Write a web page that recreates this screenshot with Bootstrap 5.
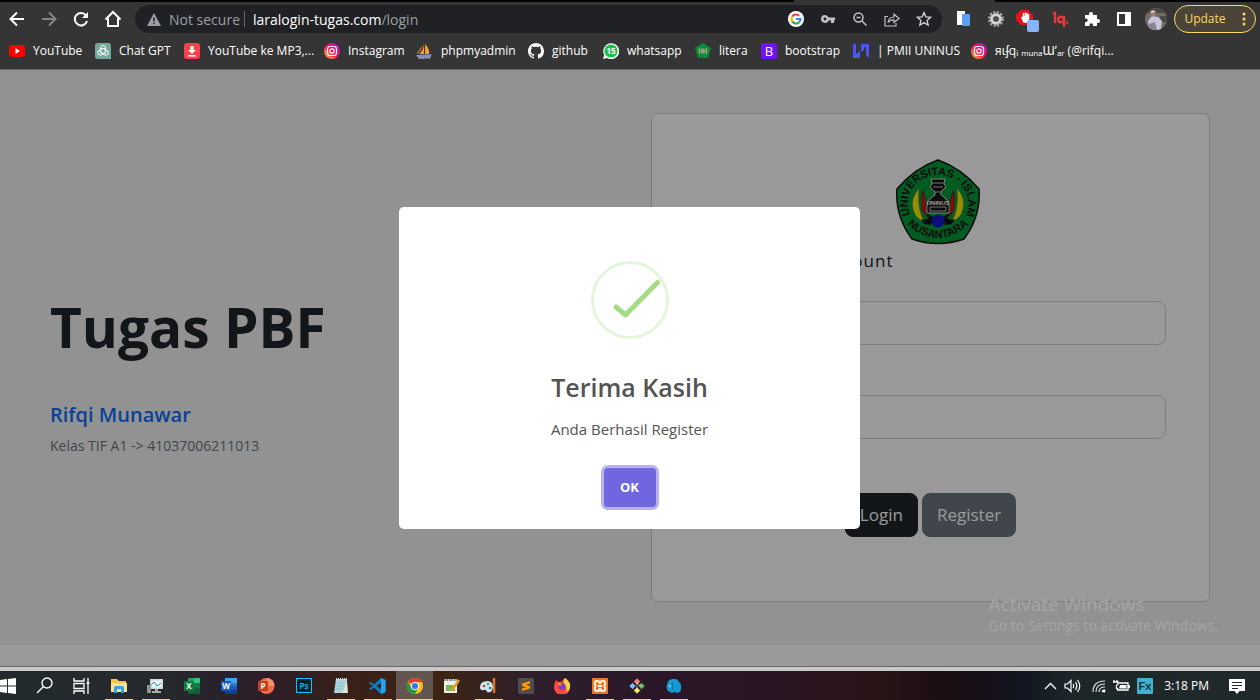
<!DOCTYPE html>
<html lang="id">
<head>
<meta charset="utf-8">
<meta name="viewport" content="width=device-width, initial-scale=1">
<title>Login - Tugas PBF</title>
<link href="https://cdn.jsdelivr.net/npm/bootstrap@5.3.0/dist/css/bootstrap.min.css" rel="stylesheet">
<style>
  body { font-family: "Open Sans", "Noto Sans", "DejaVu Sans", sans-serif; background: #353535; }
  svg { display: block; flex: none; }
  .plain { border: 0; background: none; padding: 0; color: inherit; display: flex; align-items: center; justify-content: center; }

  /* browser toolbar */
  .tabline { height: 2px; background: linear-gradient(90deg, #000 63%, #353535 63%, #353535 79%, #000 79%); }
  .toolbar { height: 34px; color: #fff; }
  .tool { width: 32px; height: 28px; flex: none; }
  .arrows { padding: 0 6px 0 1px; }
  .extensions { padding: 0 2px 0 6px; }
  .omnibox { background: #202124; height: 28px; color: #9aa0a6; font-size: 14px; border-radius: 14px; padding: 0 2px 0 8px; }
  .omnibox .host { color: #fff; }
  .divider { width: 1px; height: 16px; background: #5f6368; margin: 0 8px 0 4px; }
  .update { height: 28px; width: 82px; border: 1px solid #fdd663; border-radius: 14px; background: #4a4538; color: #fdd663; font-size: 12px; }
  .marks { display: grid; grid-template-columns: 86px 89px 140px 92px 112px 75px 92px 66px 92px 118px 1fr; height: 34px; font-size: 12px; padding: 0 0 3px 9px; border-bottom: 1px solid #666; }
  .marks a { color: #fff; text-decoration: none; white-space: nowrap; display: flex; align-items: center; gap: 8px; }

  /* web page */
  .site { background: #f4f4f4; }
  .site main { padding: 43px 50px; }
  .split { display: grid; grid-template-columns: 1fr 1fr; gap: 42px; align-items: center; }
  .intro { padding-top: 40px; }
  .site h1 { font-size: 55px; line-height: 64px; font-weight: 700; color: #212529; margin-bottom: 40px; }
  .owner { font-size: 20px; line-height: 32px; font-weight: 600; color: #0d6efd; text-decoration: none; }
  .klass { font-size: 14px; line-height: 30px; color: #6c757d; }
  .login { border: 1px solid #d2d2d2; border-radius: 6px; padding: 45px 43px 64px; background: #fff; }
  .login h5 { font-size: 17px; line-height: 24px; letter-spacing: 1px; font-weight: 400; color: #212529; }
  .login .form-control { height: 44px; border-radius: 8px; border-color: #ced4da; }
  .login .form-label { display: block; line-height: 22px; font-size: 16px; }
  .login .btn { height: 44px; padding: 0 14px; font-size: 17px; border-radius: 8px; color: #fff; }
  .login .btn-dark { background: #212529; }
  .login .btn-secondary { background: #6c757d; }
  .crest { margin-left: 15px; }
  .site footer { background: #fff; height: 21px; }
  .veil { background: rgba(0, 0, 0, .4); padding-right: 1px; }
  .notice { width: 461px; background: #fff; border-radius: 5px; color: #545454; padding: 54px 20px 22px; }
  .notice h2 { font-size: 25px; line-height: 36px; font-weight: 600; margin: 30px 0 12px; }
  .notice p { font-size: 15px; line-height: 24px; margin-bottom: 27px; }
  .ok { width: 52px; height: 39px; border: 0; border-radius: 4px; background: #7066e0; color: #fff; font-size: 13px; font-weight: 700; box-shadow: 0 0 0 3px rgba(112, 100, 223, .5); }
  .watermark { right: 42px; bottom: 30px; color: #a5a5a5; pointer-events: none; }
  .watermark div { font-size: 19px; line-height: 24px; }
  .watermark small { font-size: 14px; line-height: 20px; display: block; }
  .edge { height: 5px; background: #c8c8c8; border-top: 1px solid #666; }

  /* taskbar */
  .taskbar { height: 29px; color: #fff; background: linear-gradient(90deg, #222a2e 0, #25292d 13%, #2c1d29 21%, #3a2119 28%, #3e2413 35%, #2f1f2b 42%, #291729 52%, #2a1524 62%, #291517 69%, #1b0d12 75%, #12141f 81%, #1d272a 85%, #20292c 100%); }
  .task { width: 37px; height: 29px; }
  .running { background: linear-gradient(#f3cd9e, #f3cd9e) center bottom / 28px 1px no-repeat; }
  .current { background: linear-gradient(#f3cd9e, #f3cd9e) center bottom / 37px 1px no-repeat #635550; }
  .tray { gap: 7px; font-size: 12px; padding-right: 15px; }
  .tray time { margin: 0 13px 0 4px; }
</style>
</head>
<body class="d-flex flex-column min-vh-100">

<header>
  <div class="tabline"></div>
  <div class="toolbar d-flex align-items-center">
    <nav class="arrows d-flex" aria-label="Navigasi">
      <button class="plain tool" aria-label="Kembali"><svg width="16" height="16" fill="none" stroke="#fff" stroke-width="2"><path d="M15 8H2M8 1.500L1.500 8L8 14.500"/></svg></button>
      <button class="plain tool" aria-label="Maju"><svg width="16" height="16" fill="none" stroke="#858585" stroke-width="2"><path d="M1 8H14M8 1.500L14.500 8L8 14.500"/></svg></button>
      <button class="plain tool" aria-label="Muat ulang"><svg width="16" height="16" fill="none" stroke="#fff" stroke-width="2"><path d="M13 4.500A6.200 6.200 0 1 0 14 10"/><path d="M15 1V7H9Z" fill="#fff" stroke="none"/></svg></button>
      <button class="plain tool" aria-label="Beranda"><svg width="18" height="18" fill="none" stroke="#fff" stroke-width="2"><path d="M1.500 9.500L9 2L16.500 9.500M4 8V16H14V8"/></svg></button>
    </nav>
    <div class="omnibox d-flex align-items-center flex-grow-1">
      <svg class="ms-1 me-2" width="14" height="13"><path d="M7 0L14 13H0Z" fill="#9aa0a6"/><path d="M7 4.500V8.500M7 9.800V11.300" stroke="#202124" stroke-width="1.500"/></svg>
      <span>Not secure</span>
      <span class="divider"></span>
      <span class="flex-grow-1 text-nowrap"><span class="host">laralogin-tugas.com</span>/login</span>
      <button class="plain tool" aria-label="Google"><svg width="16" height="16" viewBox="0 0 16 16"><circle cx="8" cy="8" r="8" fill="#fff"/><g fill="none" stroke-width="2.200"><path d="M4.200 5.600A4.500 4.500 0 0 1 11.200 4.800" stroke="#ea4335"/><path d="M4.200 10.400A4.500 4.500 0 0 1 4.200 5.600" stroke="#fbbc05"/><path d="M11 11.400A4.500 4.500 0 0 1 4.200 10.400" stroke="#34a853"/><path d="M8 8H12.500A4.500 4.500 0 0 1 11 11.400" stroke="#4285f4"/></g></svg></button>
      <button class="plain tool" aria-label="Sandi"><svg width="14" height="10" fill="#bdc1c6" fill-rule="evenodd"><path d="M4 1A4 4 0 1 0 7.700 6.500H10V9H13V6.500H14V3.500H7.700A4 4 0 0 0 4 1ZM4 3.600A1.400 1.400 0 1 1 4 6.400A1.400 1.400 0 1 1 4 3.600Z"/></svg></button>
      <button class="plain tool" aria-label="Zoom"><svg width="14" height="14" fill="none" stroke="#bdc1c6" stroke-width="1.500"><circle cx="5.500" cy="5.500" r="4.500"/><path d="M9 9L13.500 13.500M3.500 5.500H7.500"/></svg></button>
      <button class="plain tool" aria-label="Bagikan"><svg width="16" height="15" fill="none" stroke="#bdc1c6" stroke-width="1.200"><path d="M4 4.500H1V14H12V11M4 10.500C4.500 7 6.500 5 10 5V2L15 6.500L10 10.500V7.800C7.500 7.800 5.500 8.500 4 10.500Z"/></svg></button>
      <button class="plain tool" aria-label="Tandai"><svg width="16" height="16" fill="none" stroke="#d5d7da" stroke-width="1.300"><path d="M8 1.500L9.900 6L14.700 6.300L11 9.400L12.200 14.200L8 11.600L3.800 14.200L5 9.400L1.300 6.300L6.100 6Z"/></svg></button>
    </div>
    <div class="extensions d-flex">
      <button class="plain tool" aria-label="Salin"><svg width="14" height="16"><rect x="0" y="0" width="8" height="14" fill="#fff"/><rect x="5" y="3" width="8" height="12" rx="1" fill="#5b9ef4"/></svg></button>
      <button class="plain tool" aria-label="Pengaturan"><svg width="16" height="16"><circle cx="8" cy="8" r="6.500" fill="none" stroke="#a7a7a7" stroke-width="3" stroke-dasharray="2 1.400"/><circle cx="8" cy="8" r="4.300" fill="none" stroke="#d2d2d2" stroke-width="3"/><circle cx="8" cy="8" r="1.800" fill="#555"/></svg></button>
      <button class="plain tool" aria-label="AdBlock"><svg width="24" height="26"><path d="M5 4H12L17 9V14L12 19H5L0 14V9Z" fill="#e8121a"/><path d="M5.500 11L8 16H11.500L12.500 13V8M7.500 12V7M9.500 12V6.500M11.200 12V7" stroke="#fff" stroke-width="1.500" fill="#fff"/><rect x="11" y="14" width="12" height="12" rx="2" fill="#8ab4f8"/></svg></button>
      <button class="plain tool" aria-label="lq"><svg width="16" height="16" fill="none" stroke="#e5383b" stroke-width="2.400"><path d="M1 2H3V12"/><circle cx="9" cy="8.500" r="2.800"/><path d="M12 5V16M14 11.500H16"/></svg></button>
      <button class="plain tool" aria-label="Ekstensi"><svg width="16" height="16" viewBox="0 0 16 16" fill="#fff"><path d="M1 4H5V3A2 2 0 0 1 9 3V4H13V8H14A2 2 0 0 1 14 12H13V15H9V14A1.700 1.700 0 0 0 5.500 14V15H1V11H2A1.700 1.700 0 0 0 2 7.500H1Z"/></svg></button>
      <button class="plain tool" aria-label="Panel samping"><svg width="14" height="14"><path d="M0 0H14V14H0ZM2 2V12H8V2Z" fill="#fff" fill-rule="evenodd"/></svg></button>
      <button class="plain tool" aria-label="Profil"><svg width="22" height="22"><clipPath id="face"><circle cx="11" cy="11" r="11"/></clipPath><g clip-path="url(#face)"><path d="M0 0H22V22H0Z" fill="#706b64"/><path d="M0 0H22V5H0ZM15 8H22V14H15Z" fill="#4c4944"/><path d="M3 13L7 8L13 9L17 13L16 22H4Z" fill="#c6c4dc"/><circle cx="8" cy="6" r="2.500" fill="#a87a6a"/><path d="M5 5Q7 0 11 4Z" fill="#d9d4d2"/><path d="M4 16L10 14L12 22H3Z" fill="#8c8296"/></g></svg></button>
    </div>
    <button class="update plain me-1"><span class="me-3">Update</span><svg width="4" height="14" fill="#fdd663"><circle cx="2" cy="2" r="1.500"/><circle cx="2" cy="7" r="1.500"/><circle cx="2" cy="12" r="1.500"/></svg></button>
  </div>
  <nav class="marks" aria-label="Bookmark">
    <a href="#"><svg width="16" height="16"><rect y="2" width="16" height="12" rx="3" fill="#f00"/><path d="M6.500 5L11 8L6.500 11Z" fill="#fff"/></svg>YouTube</a>
    <a href="#"><svg width="16" height="16"><path d="M3 0H13A3 3 0 0 1 16 3V16H3A3 3 0 0 1 0 13V3A3 3 0 0 1 3 0Z" fill="#74aa9c"/><g fill="none" stroke="#fff" stroke-width=".9"><rect x="5.500" y="2.500" width="5" height="8" rx="2.500"/><rect x="5.500" y="2.500" width="5" height="8" rx="2.500" transform="rotate(120 8 8)"/><rect x="5.500" y="2.500" width="5" height="8" rx="2.500" transform="rotate(240 8 8)"/></g></svg>Chat GPT</a>
    <a href="#"><svg width="16" height="16"><rect width="16" height="16" rx="3" fill="#fb3f4c"/><path d="M6.500 3H9.500V7H12L8 11L4 7H6.500ZM4 12H12V13.500H4Z" fill="#fff"/></svg>YouTube ke MP3,...</a>
    <a href="#"><svg width="16" height="16"><defs><linearGradient id="ig" x1="0" y1="1" x2="1" y2="0"><stop stop-color="#ffd029"/><stop offset=".5" stop-color="#f5105f"/><stop offset="1" stop-color="#a017e0"/></linearGradient></defs><circle cx="8" cy="8" r="8" fill="url(#ig)"/><rect x="3.500" y="3.500" width="9" height="9" rx="2.500" fill="none" stroke="#fff" stroke-width="1.200"/><circle cx="8" cy="8" r="2.200" fill="none" stroke="#fff" stroke-width="1.200"/></svg>Instagram</a>
    <a href="#"><svg width="17" height="16"><path d="M8 0V11H3Q8 7 8 0ZM9 1Q14 6 13 11H9ZM6 3Q5 9 0 11Q4 7 6 3Z" fill="#f89c28"/><path d="M0 12L16 11L14 15L3 16Z" fill="#6c78af"/><path d="M1 13H16M3 15H14" stroke="#bbb" stroke-dasharray="2 1"/></svg>phpmyadmin</a>
    <a href="#"><svg width="16" height="16" viewBox="0 0 16 16"><path fill="#fff" d="M8 0C3.580 0 0 3.580 0 8c0 3.540 2.290 6.530 5.470 7.590.4.070.55-.17.55-.38 0-.19-.01-.82-.01-1.490-2.010.37-2.530-.49-2.690-.94-.09-.23-.48-.94-.82-1.130-.28-.15-.68-.52-.01-.53.63-.01 1.080.58 1.230.82.72 1.210 1.870.87 2.330.66.07-.52.28-.87.51-1.070-1.780-.2-3.640-.89-3.640-3.950 0-.87.31-1.590.82-2.150-.08-.2-.36-1.020.08-2.120 0 0 .67-.21 2.200.82.64-.18 1.320-.27 2-.27s1.360.09 2 .27c1.530-1.040 2.200-.82 2.200-.82.44 1.100.16 1.920.08 2.120.51.56.82 1.270.82 2.150 0 3.070-1.870 3.750-3.650 3.950.29.25.54.73.54 1.480 0 1.070-.01 1.930-.01 2.200 0 .21.15.46.55.38A8.010 8.010 0 0 0 16 8c0-4.420-3.580-8-8-8"/></svg>github</a>
    <a href="#"><svg width="16" height="16"><path d="M0 16L1.200 12A8 8 0 1 1 4 15Z" fill="#fff"/><circle cx="8" cy="8" r="6.600" fill="#1fc04c"/><text x="8" y="11" text-anchor="middle" font-size="8" font-weight="700" fill="#fff">15</text></svg>whatsapp</a>
    <a href="#"><svg width="16" height="16"><path d="M8 0L16 5L13 15H3L0 5Z" fill="#078b3c"/><path d="M5 5Q3 8 5 11M11 5Q13 8 11 11" stroke="#d8b82a" fill="none"/><circle cx="8" cy="8" r="2.500" fill="#999"/></svg>litera</a>
    <a href="#"><svg width="16" height="16"><rect width="16" height="16" rx="2" fill="#7013f4"/><text x="8" y="13" text-anchor="middle" font-size="13" fill="#fff">B</text></svg>bootstrap</a>
    <a href="#"><svg width="16" height="16" fill="#4a56f2"><path d="M0 1H3V11L7 8V15H0ZM8 1H16V15L13 12V4H11V7L8 9Z"/></svg>| PMII UNINUS</a>
    <a href="#"><svg width="16" height="16"><circle cx="8" cy="8" r="8" fill="url(#ig)"/><rect x="3.500" y="3.500" width="9" height="9" rx="2.500" fill="none" stroke="#fff" stroke-width="1.200"/><circle cx="8" cy="8" r="2.200" fill="none" stroke="#fff" stroke-width="1.200"/></svg><span>яιʄqᵢ ₘᵤₙₐƜʼₐᵣ (@rifqi...</span></a>
  </nav>
</header>

<div class="site flex-grow-1 position-relative d-flex flex-column">
  <main class="flex-grow-1">
    <div class="split">
      <section class="intro">
        <h1>Tugas PBF</h1>
        <a class="owner" href="#">Rifqi Munawar</a>
        <p class="klass mb-0">Kelas TIF A1 -&gt; 41037006211013</p>
      </section>
      <form class="login">
        <div class="d-flex justify-content-center">
          <svg class="crest" width="86" height="86" viewBox="0 0 86 86">
            <path d="M43 1Q66 9 84 30Q86 57 69 80Q43 89 17 80Q0 57 2 30Q20 9 43 1Z" fill="#009a38" stroke="#111" stroke-width="1.500"/>
            <defs><path id="arcTop" d="M16 58C5 33 24 16 43 16C62 16 81 33 70 59"/><path id="arcLow" d="M13 66Q43 92 73 66"/></defs>
            <g font-family="Liberation Sans, sans-serif" font-weight="700" font-size="11" fill="#111">
              <text text-anchor="middle"><textPath href="#arcTop" startOffset="50%">UNIVERSITAS - ISLAM</textPath></text>
              <text text-anchor="middle"><textPath href="#arcLow" startOffset="50%">NUSANTARA</textPath></text>
            </g>
            <path d="M24 29Q15 40 18 50Q20 60 30 63Q22 52 24 29ZM62 29Q71 40 68 50Q66 60 56 63Q64 52 62 29Z" fill="#f5ee00" stroke="#665" stroke-width=".6"/>
            <path d="M28 32Q25 38 27 43Q25 52 33 58Q30 49 31 43ZM58 32Q61 38 59 43Q61 52 53 58Q56 49 55 43Z" fill="#e51313" stroke="#222" stroke-width=".6"/>
            <path d="M26 60Q30 62 34 59L31 54L38 58L36 66L29 65ZM60 60Q56 62 52 59L55 54L48 58L50 66L57 65Z" fill="#111"/>
            <circle cx="43" cy="62" r="6.500" fill="#1515d0"/>
            <path d="M36 20H50L49 25L51 28L46 33V36Q56 41 54 54H32Q30 41 40 36V33L35 28L37 25Z" fill="#151515" stroke="#fff" stroke-width=".8"/>
            <path d="M37 24H49M38 28H48M40 33H46M35 48H51V52H35Z" stroke="#eee" stroke-width=".8" fill="none"/>
            <text x="43" y="46" text-anchor="middle" font-family="Liberation Sans, sans-serif" font-size="6" font-weight="700" fill="#fff">UNINUS</text>
          </svg>
        </div>
        <h5 class="mt-1 mb-4 pb-1">Sign into your account</h5>
        <input id="email" class="form-control" type="email">
        <label class="form-label mt-1 mb-4" for="email">Email</label>
        <input id="sandi" class="form-control" type="password">
        <label class="form-label mt-1 mb-4" for="sandi">Password</label>
        <div class="d-flex justify-content-center gap-1 pt-1">
          <button type="button" class="btn btn-dark">Login</button>
          <button type="button" class="btn btn-secondary">Register</button>
        </div>
      </form>
    </div>
  </main>
  <footer></footer>
  <div class="veil position-absolute top-0 start-0 w-100 h-100 d-flex align-items-center justify-content-center">
    <div class="notice text-center d-flex flex-column align-items-center" role="dialog" aria-modal="true" aria-labelledby="judul">
      <svg width="78" height="78" fill="none"><circle cx="39" cy="39" r="37.500" stroke="#e4f5db" stroke-width="3"/><path d="M25 46L34.500 54L66.500 21.500" stroke="#a5dc86" stroke-width="5" stroke-linecap="round" stroke-linejoin="round"/></svg>
      <h2 id="judul">Terima Kasih</h2>
      <p>Anda Berhasil Register</p>
      <button class="ok">OK</button>
    </div>
  </div>
  <div class="watermark position-absolute"><div>Activate Windows</div><small>Go to Settings to activate Windows.</small></div>
</div>
<div class="edge"></div>

<footer class="taskbar d-flex justify-content-between">
  <div class="d-flex">
    <button class="plain justify-content-start pe-2" aria-label="Start"><svg width="18" height="16" fill="#fff"><path d="M0 2L7 1V7.500H0ZM8 1L16 0V7.500H8ZM0 8.500H7V15L0 14ZM8 8.500H16V16L8 15Z"/></svg></button>
    <button class="plain task" aria-label="Cari"><svg width="17" height="17" fill="none" stroke="#fff" stroke-width="1.400"><circle cx="11" cy="6" r="5"/><path d="M7.500 9.500L1 16"/></svg></button>
    <button class="plain task" aria-label="Task view"><svg width="17" height="16" fill="none" stroke="#fff" stroke-width="1.300"><path d="M1 0V3H11V0M1 16V13H11V16M1 5.500H11V10.500H1ZM15 0V16M13.500 5H16.500"/></svg></button>
    <button class="plain task running" aria-label="Explorer"><svg width="17" height="16"><path d="M1 1H7L9 3H16V14H1Z" fill="#f6c344"/><path d="M1 5H17V14H1Z" fill="#fde391"/><path d="M4 15V10Q4 8 6 8H12Q14 8 14 10V15H11V11H7V15Z" fill="#33a4e0"/></svg></button>
    <button class="plain task running" aria-label="Monitor"><svg width="17" height="16"><rect x="3" y="1" width="13" height="10" fill="#d6d6d6"/><rect x="4.500" y="2.500" width="10" height="7" fill="#e9f8ff"/><path d="M4 7L7 4L10 8L14 5" stroke="#1686b8" fill="none"/><path d="M8 11H11V13H14V15H5V13H8Z" fill="#aaa"/><rect y="7" width="4" height="8" fill="#8b9793"/></svg></button>
    <button class="plain task" aria-label="Excel"><svg width="17" height="16"><path d="M4 0H16V16H4Z" fill="#185c37"/><path d="M4 0H10V8H4Z" fill="#21a366"/><path d="M10 0H16V5H10Z" fill="#33c481"/><path d="M10 5H16V10H10Z" fill="#107c41"/><rect y="3" width="10" height="10" fill="#107c41"/><text x="5" y="11" text-anchor="middle" font-size="8" font-weight="700" fill="#fff">X</text></svg></button>
    <button class="plain task" aria-label="Word"><svg width="17" height="16"><path d="M4 0H16V5H4Z" fill="#41a5ee"/><path d="M4 5H16V8H4Z" fill="#2b7cd3"/><path d="M4 8H16V12H4Z" fill="#185abd"/><path d="M4 12H16V16H4Z" fill="#103f91"/><rect y="3" width="10" height="10" fill="#185abd"/><text x="5" y="11" text-anchor="middle" font-size="8" font-weight="700" fill="#fff">W</text></svg></button>
    <button class="plain task" aria-label="PowerPoint"><svg width="17" height="16"><circle cx="8.500" cy="8" r="8" fill="#ed6c47"/><path d="M8.500 0A8 8 0 0 1 16.500 8H8.500Z" fill="#ff8f6b"/><rect y="3" width="10" height="10" fill="#c43e1c"/><text x="5" y="11" text-anchor="middle" font-size="8" font-weight="700" fill="#fff">P</text></svg></button>
    <button class="plain task" aria-label="Photoshop"><svg width="16" height="16"><rect x=".5" y=".5" width="15" height="14" fill="#001d2b" stroke="#00c8ff"/><text x="8" y="11" text-anchor="middle" font-size="8" font-weight="600" fill="#00c8ff">Ps</text></svg></button>
    <button class="plain task running" aria-label="Notepad"><svg width="16" height="16"><path d="M3 1H14L13 15H1Z" fill="#a9d6dd"/><path d="M14 2L15 15H9Z" fill="#e2e2d3"/><path d="M3 1H15" stroke="#ddd" stroke-width="2" stroke-dasharray="1 1"/><path d="M4 5H12M4 8H12M3 11H11" stroke="#8fc0ca"/></svg></button>
    <button class="plain task running" aria-label="VS Code"><svg width="17" height="16"><path d="M12 0L16.500 2V14L12 16L5 9.500L2 12L0 11L4 8L0 5L2 4L5 6.500Z" fill="#0d7fc8"/><path d="M12 0L16.500 2V14L12 16Z" fill="#25a5ee"/><path d="M12 4.500V11.500L7.500 8Z" fill="#3a2217"/></svg></button>
    <button class="plain task current" aria-label="Chrome"><svg width="16" height="16"><circle cx="8" cy="8" r="8" fill="#fbc116"/><path d="M8 8L1.070 4A8 8 0 0 1 14.930 4H8Z" fill="#e33b2e"/><path d="M1.070 4L4.600 10L8 12L11.400 10L8 16A8 8 0 0 1 1.070 4Z" fill="#229a49"/><circle cx="8" cy="8" r="4" fill="#fff"/><circle cx="8" cy="8" r="3.100" fill="#3576e8"/></svg></button>
    <button class="plain task" aria-label="Notepad++"><svg width="16" height="16"><path d="M0 1H13V15H0Z" fill="#eee"/><path d="M0 2H13" stroke="#777" stroke-width="2" stroke-dasharray="1.500 1"/><path d="M2 7H11V13H2Z" fill="#7ab648"/><path d="M15 2L8 12" stroke="#eb9d1f" stroke-width="2.500"/></svg></button>
    <button class="plain task running" aria-label="Paint"><svg width="17" height="16"><path d="M8 3Q0 3 0 9Q0 13 4 12Q6 11 7 14Q12 16 13 9Q13 4 8 3Z" fill="#cfe5f2"/><circle cx="4" cy="8" r="1.300" fill="#c33"/><circle cx="8" cy="6" r="1.300" fill="#4a4"/><circle cx="10" cy="10" r="1.300" fill="#27c"/><path d="M14 0V15" stroke="#d9772a" stroke-width="2.500"/></svg></button>
    <button class="plain task" aria-label="Sublime Text"><svg width="16" height="16"><rect width="16" height="16" rx="1" fill="#4d4d4d"/><path d="M12 3L4 5.500V8L8 9.200L4 10.500V13L12 10.500V8L8 6.800L12 5.500Z" fill="#ff9800"/></svg></button>
    <button class="plain task" aria-label="Firefox"><svg width="17" height="16"><path d="M11 0Q17 4 16 10A8 7.500 0 0 1 0 9Q0 5 2 2L4 4Q7 3 8 4Q8 2 11 0Z" fill="#ff4b3e"/><path d="M11 0Q17 4 16 10Q15 13 12 14Q14 9 10 6Q9 3 11 0Z" fill="#ffd33d"/><circle cx="8" cy="8.500" r="3.500" fill="#7641c8"/><path d="M3 5L8 6L6 8Z" fill="#ff9830"/></svg></button>
    <button class="plain task running" aria-label="XAMPP"><svg width="16" height="16"><rect width="16" height="16" rx="1" fill="#ef7622"/><path d="M5 3Q8 3 8 6Q8 3 11 3Q14 3 13 6Q12 8 13 10Q14 13 11 13Q8 13 8 10Q8 13 5 13Q2 13 3 10Q4 8 3 6Q2 3 5 3ZM6 8H10" fill="none" stroke="#fff" stroke-width="1.800"/></svg></button>
    <button class="plain task running" aria-label="Git"><svg width="16" height="16" stroke="#111" stroke-width=".5"><path d="M8 0L11.500 3.500L8 7L4.500 3.500Z" fill="#ef7b7b"/><path d="M3.500 4.500L7 8L3.500 11.500L0 8Z" fill="#83b4f4"/><path d="M8 9L11.500 12.500L8 16L4.500 12.500Z" fill="#f6dd62"/><path d="M12.500 4.500L16 8L12.500 11.500L9 8Z" fill="#6eb35b"/><path d="M8 4V13M8 5L12 8" stroke="#fff"/></svg></button>
    <button class="plain task running" aria-label="pgAdmin"><svg width="16" height="16"><path d="M1 7Q2 0 8 1Q11 0 13 4Q17 7 14 14L10 15V14Q7 14 6 15L2 13Q0 10 1 7Z" fill="#159bd3"/><path d="M6 4Q8 9 6 12" stroke="#0a6ca0" fill="none"/><circle cx="4" cy="8" r=".8" fill="#fff"/></svg></button>
  </div>
  <div class="tray d-flex align-items-center">
    <button class="plain" aria-label="Ikon lain"><svg width="13" height="8" fill="none" stroke="#fff" stroke-width="1.300"><path d="M1 7L6.500 1.500L12 7"/></svg></button>
    <button class="plain" aria-label="Suara"><svg width="17" height="14" fill="none" stroke="#fff" stroke-width="1.200"><path d="M1 5V9H3.500L7 12.500V1.500L3.500 5ZM9 5Q10.500 7 9 9M11.500 3Q14 7 11.500 11M13.500 1Q18 7 13.500 13"/></svg></button>
    <button class="plain ms-1" aria-label="Wi-Fi"><svg width="14" height="14" fill="none" stroke="#ddd" stroke-width="1.200"><path d="M1 13Q1 2 13 2M4 13Q4 5 13 5M7 13Q7 8 13 8M10 13Q10 11 13 11"/><circle cx="12" cy="12" r="1.500" fill="#fff" stroke="none"/></svg></button>
    <button class="plain" aria-label="Baterai"><svg width="17" height="13"><path d="M5.500 4H15V11H4.500V9" fill="none" stroke="#fff" stroke-width="1.300"/><path d="M7 6H13.500V9.500H6ZM15 6H17V9H15Z" fill="#fff"/><path d="M1 1V3M4 1V3M0 3H5V5L3.500 6.500V10" stroke="#fff" fill="none" stroke-width="1.300"/></svg></button>
    <button class="plain" aria-label="Fx"><svg width="16" height="16"><rect width="16" height="16" rx="1" fill="#3fb3cb"/><text x="8" y="12" text-anchor="middle" font-family="Liberation Sans, sans-serif" font-size="11" font-weight="700" fill="#15333d">Fx</text></svg></button>
    <time class="text-nowrap" datetime="15:18">3:18 PM</time>
    <button class="plain" aria-label="Notifikasi"><svg width="16" height="16"><path d="M0 1H16V13H10.500L8 16L5.500 13H0Z" fill="#fff"/><path d="M3 4.500H13M3 7.500H13M3 10.500H9" stroke="#20292c"/></svg></button>
  </div>
</footer>

<script src="https://cdn.jsdelivr.net/npm/bootstrap@5.3.0/dist/js/bootstrap.bundle.min.js"></script>
</body>
</html>
